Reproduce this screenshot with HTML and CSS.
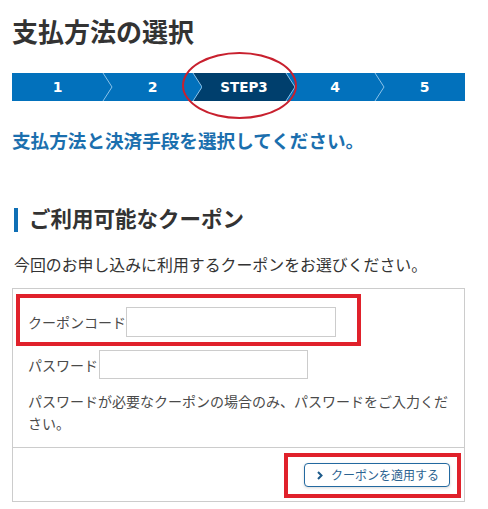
FILE: index.html
```html
<!DOCTYPE html>
<html lang="ja">
<head>
<meta charset="utf-8">
<title>支払方法の選択</title>
<link rel="stylesheet" href="styles.css">
</head>
<body>
<main class="page">
  <h1 class="title">支払方法の選択</h1>

  <div class="steps-wrap">
    <ol class="steps">
      <li class="step step-1">1</li>
      <li class="sep"><svg viewBox="0 0 9 28" width="9" height="28"><polyline points="0,0 9,14 0,28" class="sep-line"/></svg></li>
      <li class="step step-2">2</li>
      <li class="sep sep-in"><svg viewBox="0 0 9 28" width="9" height="28"><polygon points="0,0 9,0 9,28 0,28 9,14" class="sep-fill"/><polyline points="0,0 9,14 0,28" class="sep-line"/></svg></li>
      <li class="step step-3 active">STEP3</li>
      <li class="sep sep-out"><svg viewBox="0 0 9 28" width="9" height="28"><polygon points="0,0 9,14 0,28" class="sep-fill"/><polyline points="0,0 9,14 0,28" class="sep-line"/></svg></li>
      <li class="step step-4">4</li>
      <li class="sep"><svg viewBox="0 0 9 28" width="9" height="28"><polyline points="0,0 9,14 0,28" class="sep-line"/></svg></li>
      <li class="step step-5">5</li>
    </ol>
    <span class="mark-ellipse"></span>
  </div>

  <p class="lead">支払方法と決済手段を選択してください。</p>

  <h2 class="section-title"><span class="section-bar"></span>ご利用可能なクーポン</h2>
  <p class="desc">今回のお申し込みに利用するクーポンをお選びください。</p>

  <section class="coupon-box">
    <div class="coupon-body">
      <div class="field">
        <label class="field-label" for="code">クーポンコード</label>
        <input class="field-input code-input" id="code" type="text">
      </div>
      <div class="field field-pass">
        <label class="field-label" for="pass">パスワード</label>
        <input class="field-input pass-input" id="pass" type="password">
      </div>
      <p class="help">パスワードが必要なクーポンの場合のみ、パスワードをご入力ください。</p>
    </div>
    <div class="coupon-foot">
      <button class="apply-btn" type="button"><svg class="apply-icon" viewBox="0 0 6 9" width="6" height="9"><polyline points="1,1 4.5,4.5 1,8"/></svg>クーポンを適用する</button>
    </div>
    <span class="mark-rect mark-code"></span>
    <span class="mark-rect mark-btn"></span>
  </section>
</main>
</body>
</html>
```

FILE: styles.css
```css
* { box-sizing: border-box; }

html, body {
  margin: 0;
  padding: 0;
  background: #ffffff;
}

body {
  font-family: "Noto Sans CJK JP", "Noto Sans", sans-serif;
  color: #333333;
}

.page {
  padding: 12px 23px 0 12px;
  width: 488px;
}

.title {
  margin: 0;
  font-size: 26px;
  line-height: 37px;
  font-weight: 700;
  color: #333333;
}

.steps-wrap {
  position: relative;
  margin-top: 24px;
  height: 28px;
}

.steps {
  display: flex;
  margin: 0;
  padding: 0;
  list-style: none;
  height: 28px;
  background: #0271bc;
}

.step {
  display: flex;
  align-items: center;
  justify-content: center;
  height: 28px;
  color: #ffffff;
  font-family: "DejaVu Sans", Verdana, sans-serif;
  font-weight: 700;
  font-size: 14px;
}

.step-1 { width: 91px; }
.step-2 { width: 81px; }
.step-3 { width: 84px; }
.step-4 { width: 80px; }
.step-5 { width: 81px; }

.step.active {
  background: #003f6d;
  font-size: 13.5px;
}

.sep {
  width: 9px;
  height: 28px;
  flex: none;
}

.sep svg { display: block; overflow: visible; }

.sep-line {
  fill: none;
  stroke: #8cc3ea;
  stroke-width: 1;
}

.sep-fill {
  fill: #003f6d;
}

.mark-ellipse {
  position: absolute;
  left: 170px;
  top: -21px;
  width: 115px;
  height: 67px;
  border: 2px solid #c8202e;
  border-radius: 50%;
  pointer-events: none;
}

.lead {
  margin: 26px 0 0;
  font-size: 18.6px;
  line-height: 26px;
  font-weight: 700;
  color: #1b6fae;
}

.section-title {
  display: flex;
  align-items: center;
  margin: 50px 0 0;
  font-size: 21.5px;
  line-height: 30px;
  font-weight: 700;
  color: #333333;
}

.section-bar {
  display: block;
  width: 4px;
  height: 24px;
  margin: 3px 11px 0 2px;
  background: #0f6fb5;
}

.desc {
  margin: 20px 0 0 2px;
  font-size: 15.9px;
  line-height: 24px;
  color: #333333;
}

.coupon-box {
  position: relative;
  margin-top: 11px;
  border: 1px solid #cccccc;
  width: 453px;
}

.coupon-body {
  padding: 18px 8px 13px 15px;
}

.field {
  display: flex;
  align-items: center;
}

.field-pass {
  margin-top: 13px;
}

.field-label {
  font-size: 14px;
  line-height: 20px;
  color: #4a4a4a;
}

.field-input {
  margin: 0;
  border: 1px solid #cccccc;
  background: #ffffff;
  padding: 0 6px;
  font-size: 14px;
  outline: none;
}

.code-input {
  width: 210px;
  height: 30px;
}

.pass-input {
  width: 209px;
  height: 29px;
  margin-left: 1px;
}

.help {
  margin: 11px 0 0;
  font-size: 14px;
  line-height: 22px;
  color: #4a4a4a;
}

.coupon-foot {
  display: flex;
  justify-content: flex-end;
  border-top: 1px solid #cccccc;
  padding: 15px 14px 14px;
}

.apply-btn {
  display: flex;
  align-items: center;
  justify-content: center;
  gap: 8px;
  width: 146px;
  height: 24px;
  padding: 0 0 0 2px;
  border: 1px solid #2369a0;
  border-radius: 4px;
  background: #ffffff;
  box-shadow: 0 1px 3px rgba(0, 0, 0, 0.15);
  color: #2b6391;
  font-family: "Noto Sans CJK JP", "Noto Sans", sans-serif;
  font-size: 12px;
  line-height: 22px;
}

.apply-icon polyline {
  fill: none;
  stroke: #1d5a8a;
  stroke-width: 2;
}

.mark-rect {
  position: absolute;
  border: 4px solid #e0212b;
  pointer-events: none;
}

.mark-code {
  left: 3px;
  top: 5px;
  width: 345px;
  height: 52px;
}

.mark-btn {
  left: 271px;
  top: 164px;
  width: 177px;
  height: 45px;
}
```
